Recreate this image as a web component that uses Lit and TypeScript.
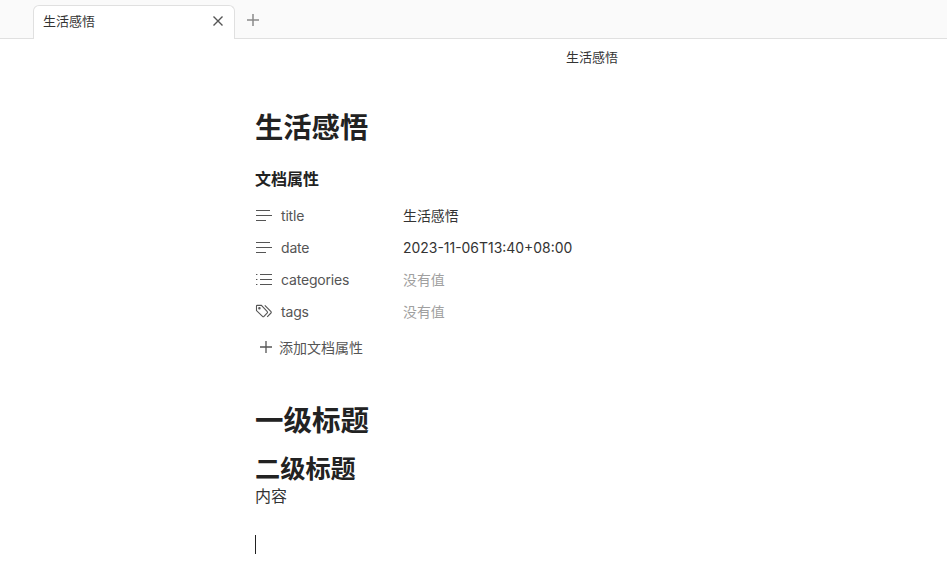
import { LitElement, html, css, svg } from "lit";
import { customElement } from "lit/decorators.js";

const lines = svg`<path d="M1 3.5h14M1 8.5h16M1 13.5h10"/>`;
const icons: Record<string, unknown> = {
  text: lines,
  date: lines,
  list: svg`<path d="M1 3.5h1.4M1 8.5h1.4M1 13.5h1.4M5 3.5h12M5 8.5h12M5 13.5h12"/>`,
  tags: svg`<path d="M1.5 3v4.6l6 5.8c.5.5 1.1.5 1.5 0l3.3-3.4c.4-.5.4-1 0-1.4L6.4 2.4H2.1c-.4 0-.6.2-.6.6z"/><path d="M9.8 2.4l6.2 6.2c.4.5.4 1 0 1.4l-3.8 3.9"/><circle cx="4.4" cy="5.2" r=".7"/>`,
};

@customElement("app-root")
export class AppRoot extends LitElement {
  static styles = css`
    :host {
      display: block;
      height: 566px;
      overflow: hidden;
      background: #fff;
      font-family: Inter, "Noto Sans CJK SC", sans-serif;
      color: #222;
    }
    .tabbar {
      height: 38px;
      background: #fafafa;
      border-bottom: 1px solid #e0e0e0;
      display: flex;
      align-items: flex-end;
      padding-left: 33px;
      gap: 11px;
    }
    .tab {
      width: 202px;
      height: 34px;
      margin-bottom: -1px;
      box-sizing: border-box;
      background: #fff;
      border: 1px solid #e0e0e0;
      border-bottom: none;
      border-radius: 6px 6px 0 0;
      display: flex;
      align-items: center;
      justify-content: space-between;
      padding: 0 10px 4px 9px;
      font-size: 13px;
      color: #333;
    }
    .close { width: 12px; height: 12px; stroke: #555; stroke-width: 1.4; fill: none; }
    .plus { width: 14px; height: 14px; stroke: #8a8a8a; stroke-width: 1.5; fill: none; margin-bottom: 11px; }
    .doc-title {
      text-align: center;
      font-size: 13px;
      color: #333;
      line-height: 20px;
      padding: 8px 0 0 237px;
    }
    .content { padding: 40px 0 0 255px; }
    h1, h2 { margin: 0; font-weight: 700; color: #222; }
    .title { font-size: 28.3px; line-height: 42px; }
    .props-h { font-size: 16px; font-weight: 600; line-height: 24px; margin-top: 18px; color: #222; }
    .props { margin-top: 8px; display: flex; flex-direction: column; }
    .prop { display: flex; align-items: center; height: 32px; font-size: 14px; }
    .prop svg { width: 18px; height: 16px; stroke: #555; stroke-width: 1.1; fill: none; flex: none; margin-right: 8px; }
    .key { width: 122px; color: #555; letter-spacing: -0.18px; }
    .val { color: #333; font-size: 13.95px; }
    .empty { color: #a0a0a0; }
    .add { display: flex; align-items: center; font-size: 14px; color: #555; height: 24px; margin-top: 8px; padding-left: 4px; }
    .add svg { width: 14px; height: 14px; stroke: #555; stroke-width: 1.3; fill: none; margin-right: 6px; }
    .h1 { font-size: 28.5px; line-height: 40px; margin-top: 42px; }
    .h2 { font-size: 25.2px; line-height: 34px; margin-top: 11px; }
    .p { font-size: 16px; line-height: 20px; color: #333; }
    .caret { width: 1px; height: 19px; background: #222; margin-top: 29px; }
  `;

  render() {
    const rows = [
      ["text", "title", "生活感悟", false],
      ["date", "date", "2023-11-06T13:40+08:00", false],
      ["list", "categories", "没有值", true],
      ["tags", "tags", "没有值", true],
    ] as const;
    return html`
      <div class="tabbar">
        <div class="tab">
          <span>生活感悟</span>
          <svg class="close" viewBox="0 0 12 12"><path d="M1.5 1.5l9 9M10.5 1.5l-9 9"/></svg>
        </div>
        <svg class="plus" viewBox="0 0 14 14"><path d="M7 1v12M1 7h12"/></svg>
      </div>
      <div class="doc-title">生活感悟</div>
      <div class="content">
        <h1 class="title">生活感悟</h1>
        <div class="props-h">文档属性</div>
        <div class="props">
          ${rows.map(
            ([ic, k, v, empty]) => html`<div class="prop">
              <svg viewBox="0 0 18 16">${icons[ic]}</svg>
              <span class="key">${k}</span>
              <span class="val ${empty ? "empty" : ""}">${v}</span>
            </div>`
          )}
        </div>
        <div class="add">
          <svg viewBox="0 0 14 14"><path d="M7 1v12M1 7h12"/></svg>
          添加文档属性
        </div>
        <h1 class="h1">一级标题</h1>
        <h2 class="h2">二级标题</h2>
        <div class="p">内容</div>
        <div class="caret"></div>
      </div>
    `;
  }
}
